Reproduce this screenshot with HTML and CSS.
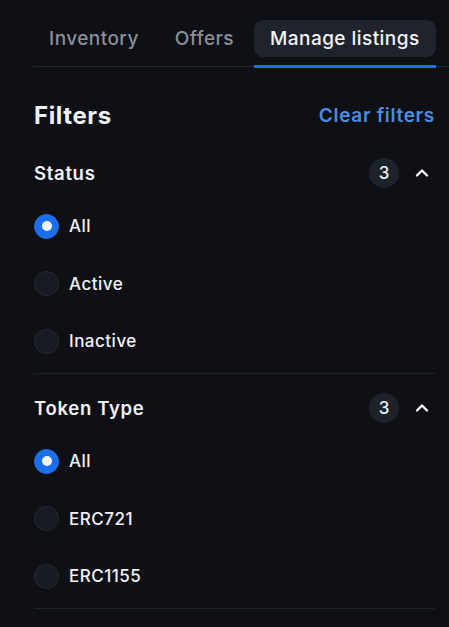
FILE: index.html
```html
<!DOCTYPE html>
<html lang="en">
<head>
<meta charset="utf-8">
<title>Manage listings</title>
<link rel="stylesheet" href="styles.css">
</head>
<body>
<div class="page">
  <nav class="tabs">
    <div class="tab"><span class="tab-label">Inventory</span></div>
    <div class="tab"><span class="tab-label">Offers</span></div>
    <div class="tab active"><span class="tab-label">Manage listings</span></div>
  </nav>

  <div class="content">
    <div class="filters-head">
      <h2 class="filters-title">Filters</h2>
      <span class="clear">Clear filters</span>
    </div>

    <section class="group">
      <div class="group-head">
        <span class="group-title">Status</span>
        <div class="group-meta">
          <span class="badge">3</span>
          <svg class="chev" width="14" height="10" viewBox="0 0 14 10"><path d="M2 7.5 L7 2.5 L12 7.5" fill="none" stroke="#f2f4f7" stroke-width="2.4" stroke-linecap="round" stroke-linejoin="round"/></svg>
        </div>
      </div>
      <div class="options">
        <div class="option"><span class="radio checked"></span><span class="opt-label">All</span></div>
        <div class="option"><span class="radio"></span><span class="opt-label">Active</span></div>
        <div class="option"><span class="radio"></span><span class="opt-label">Inactive</span></div>
      </div>
    </section>

    <section class="group">
      <div class="group-head">
        <span class="group-title">Token Type</span>
        <div class="group-meta">
          <span class="badge">3</span>
          <svg class="chev" width="14" height="10" viewBox="0 0 14 10"><path d="M2 7.5 L7 2.5 L12 7.5" fill="none" stroke="#f2f4f7" stroke-width="2.4" stroke-linecap="round" stroke-linejoin="round"/></svg>
        </div>
      </div>
      <div class="options">
        <div class="option"><span class="radio checked"></span><span class="opt-label">All</span></div>
        <div class="option"><span class="radio"></span><span class="opt-label">ERC721</span></div>
        <div class="option"><span class="radio"></span><span class="opt-label">ERC1155</span></div>
      </div>
    </section>
  </div>
</div>
</body>
</html>
```

FILE: styles.css
```css
html, body {
  margin: 0;
  padding: 0;
  background: #0e1016;
}
body {
  font-family: Inter, "Noto Sans", sans-serif;
  color: #f1f3f6;
  width: 449px;
  height: 627px;
  overflow: hidden;
}
.page {
  padding-top: 20px;
}
.tabs {
  display: flex;
  gap: 4px;
  margin-left: 33px;
  border-bottom: 1px solid #23272e;
}
.tab {
  padding-bottom: 8px;
  border-bottom: 3px solid transparent;
  margin-bottom: -2px;
}
.tab.active {
  border-bottom-color: #1f6fe5;
}
.tab-label {
  display: block;
  height: 37px;
  line-height: 37px;
  padding: 0 16px;
  border-radius: 9px;
  font-size: 19px;
  font-weight: 500;
  color: #8a8f98;
  letter-spacing: 0.45px;
}
.tab.active .tab-label {
  background: #1f232b;
  color: #f1f3f6;
}

.content {
  margin: 0 14px 0 34px;
}
.filters-head {
  display: flex;
  justify-content: space-between;
  align-items: center;
  height: 30px;
  margin-top: 33px;
  margin-bottom: 28px;
}
.filters-title {
  margin: 0;
  font-size: 24px;
  font-weight: 700;
  letter-spacing: 0.6px;
}
.clear {
  font-size: 19px;
  font-weight: 600;
  color: #4b8de4;
  letter-spacing: 0.7px;
}
.group {
  padding: 0 0 20px;
  border-bottom: 1px solid #1e2229;
}
.group + .group {
  padding-top: 19px;
}
.group-head {
  display: flex;
  justify-content: space-between;
  align-items: center;
  height: 30px;
}
.group-title {
  font-size: 18.5px;
  font-weight: 600;
  letter-spacing: 0.7px;
}
.group-meta {
  display: flex;
  align-items: center;
  gap: 16px;
}
.badge {
  width: 30px;
  height: 30px;
  border-radius: 50%;
  background: #1e222a;
  display: flex;
  align-items: center;
  justify-content: center;
  font-size: 17px;
  font-weight: 500;
}
.chev {
  display: block;
  margin-right: 6px;
}
.options {
  display: flex;
  flex-direction: column;
  gap: 33.5px;
  margin-top: 26px;
}
.option {
  display: flex;
  align-items: center;
  gap: 10px;
  height: 24px;
}
.radio {
  box-sizing: border-box;
  width: 25px;
  height: 25px;
  border-radius: 50%;
  background: #171a21;
  border: 1px solid #262a32;
  display: flex;
  align-items: center;
  justify-content: center;
  flex: none;
}
.radio.checked {
  background: #1b6fea;
  border-color: #1b6fea;
}
.radio.checked::after {
  content: "";
  width: 10px;
  height: 10px;
  border-radius: 50%;
  background: #f4f6fa;
}
.opt-label {
  font-size: 17px;
  font-weight: 500;
  letter-spacing: 0.5px;
}
```
